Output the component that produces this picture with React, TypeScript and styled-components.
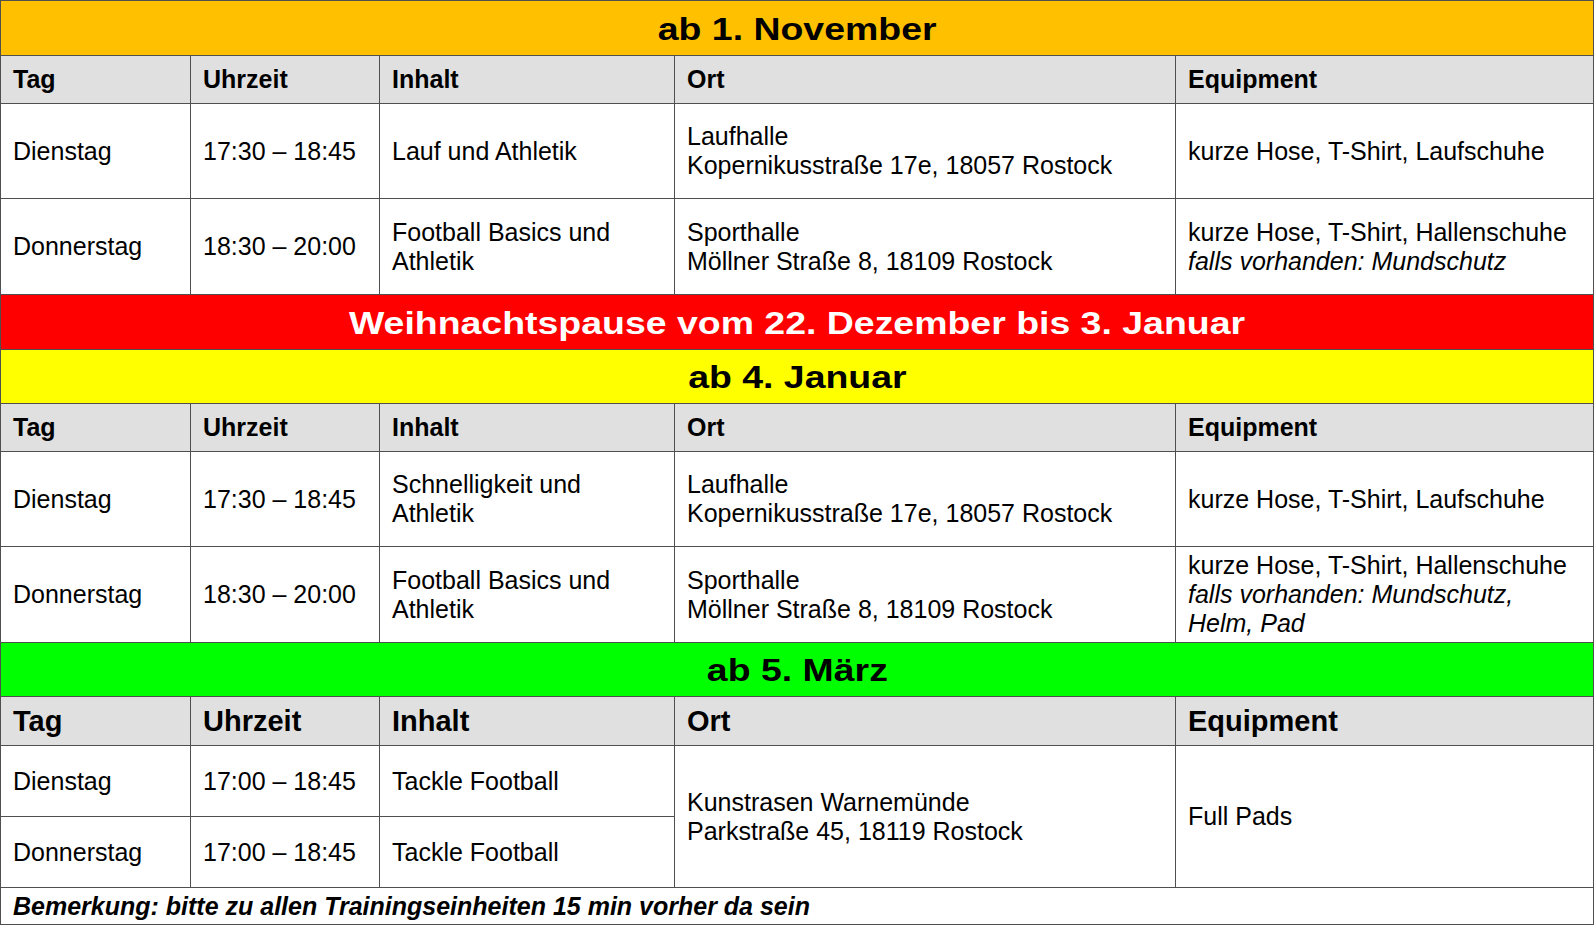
import React from "react";
import styled, { createGlobalStyle } from "styled-components";

const GlobalStyle = createGlobalStyle`
  html, body {
    margin: 0;
    padding: 0;
    background: #ffffff;
  }
  body {
    font-family: "Liberation Sans", Arial, Helvetica, sans-serif;
    color: #000;
  }
`;

type Row = {
  day: string;
  time: string;
  content: React.ReactNode;
  place?: React.ReactNode;
  gear?: React.ReactNode;
  height: number;
};

type Section = {
  title: string;
  bg: string;
  titleHeight: number;
  headHeight: number;
  headSize: number;
  rows: Row[];
};

const Note = styled.span`
  font-style: italic;
`;

const november: Section = {
  title: "ab 1. November",
  bg: "#ffc000",
  titleHeight: 55,
  headHeight: 48,
  headSize: 25,
  rows: [
    {
      day: "Dienstag",
      time: "17:30 – 18:45",
      content: "Lauf und Athletik",
      place: (
        <>
          Laufhalle
          <br />
          Kopernikusstraße 17e, 18057 Rostock
        </>
      ),
      gear: "kurze Hose, T-Shirt, Laufschuhe",
      height: 95,
    },
    {
      day: "Donnerstag",
      time: "18:30 – 20:00",
      content: (
        <>
          Football Basics und
          <br />
          Athletik
        </>
      ),
      place: (
        <>
          Sporthalle
          <br />
          Möllner Straße 8, 18109 Rostock
        </>
      ),
      gear: (
        <>
          kurze Hose, T-Shirt, Hallenschuhe
          <br />
          <Note>falls vorhanden: Mundschutz</Note>
        </>
      ),
      height: 96,
    },
  ],
};

const januar: Section = {
  title: "ab 4. Januar",
  bg: "#ffff00",
  titleHeight: 54,
  headHeight: 48,
  headSize: 25,
  rows: [
    {
      day: "Dienstag",
      time: "17:30 – 18:45",
      content: (
        <>
          Schnelligkeit und
          <br />
          Athletik
        </>
      ),
      place: (
        <>
          Laufhalle
          <br />
          Kopernikusstraße 17e, 18057 Rostock
        </>
      ),
      gear: "kurze Hose, T-Shirt, Laufschuhe",
      height: 95,
    },
    {
      day: "Donnerstag",
      time: "18:30 – 20:00",
      content: (
        <>
          Football Basics und
          <br />
          Athletik
        </>
      ),
      place: (
        <>
          Sporthalle
          <br />
          Möllner Straße 8, 18109 Rostock
        </>
      ),
      gear: (
        <>
          kurze Hose, T-Shirt, Hallenschuhe
          <br />
          <Note>
            falls vorhanden: Mundschutz,
            <br />
            Helm, Pad
          </Note>
        </>
      ),
      height: 96,
    },
  ],
};

const maerz: Section = {
  title: "ab 5. März",
  bg: "#00ff00",
  titleHeight: 54,
  headHeight: 49,
  headSize: 29,
  rows: [
    {
      day: "Dienstag",
      time: "17:00 – 18:45",
      content: "Tackle Football",
      place: (
        <>
          Kunstrasen Warnemünde
          <br />
          Parkstraße 45, 18119 Rostock
        </>
      ),
      gear: "Full Pads",
      height: 71,
    },
    {
      day: "Donnerstag",
      time: "17:00 – 18:45",
      content: "Tackle Football",
      height: 71,
    },
  ],
};

const columns = ["Tag", "Uhrzeit", "Inhalt", "Ort", "Equipment"];
const colWidths = [190, 189, 295, 501, 418];

const SectionHead = ({ section }: { section: Section }) => (
  <>
    <Banner $height={section.titleHeight}>
      <BannerCell colSpan={5} $bg={section.bg} $color="#000">
        <BannerText $stretch={1.17}>{section.title}</BannerText>
      </BannerCell>
    </Banner>
    <HeadRow $height={section.headHeight}>
      {columns.map((c) => (
        <HeadCell key={c} $size={section.headSize}>
          {c}
        </HeadCell>
      ))}
    </HeadRow>
  </>
);

const Body = ({ section, merged }: { section: Section; merged?: boolean }) => (
  <>
    {section.rows.map((r, i) => (
      <BodyRow key={i} $height={r.height}>
        <Cell>{r.day}</Cell>
        <Cell>{r.time}</Cell>
        <Cell>{r.content}</Cell>
        {(!merged || i === 0) && (
          <>
            <Cell rowSpan={merged ? section.rows.length : 1}>{r.place}</Cell>
            <Cell rowSpan={merged ? section.rows.length : 1}>{r.gear}</Cell>
          </>
        )}
      </BodyRow>
    ))}
  </>
);

export default function App() {
  return (
    <>
      <GlobalStyle />
      <Schedule>
        <colgroup>
          {colWidths.map((w, i) => (
            <col key={i} style={{ width: w }} />
          ))}
        </colgroup>
        <tbody>
          <SectionHead section={november} />
          <Body section={november} />
          <Banner $height={55}>
            <BannerCell colSpan={5} $bg="#ff0000" $color="#fff">
              <BannerText $stretch={1.17}>
                Weihnachtspause vom 22. Dezember bis 3. Januar
              </BannerText>
            </BannerCell>
          </Banner>
          <SectionHead section={januar} />
          <Body section={januar} />
          <SectionHead section={maerz} />
          <Body section={maerz} merged />
          <RemarkRow>
            <RemarkCell colSpan={5}>
              Bemerkung: bitte zu allen Trainingseinheiten 15 min vorher da
              sein
            </RemarkCell>
          </RemarkRow>
        </tbody>
      </Schedule>
    </>
  );
}

const Schedule = styled.table`
  width: 1594px;
  table-layout: fixed;
  border-collapse: collapse;
  font-size: 25px;
  line-height: 29px;
  td {
    border: 1px solid #4f4f4f;
    padding: 0 12px;
    vertical-align: middle;
    text-align: left;
  }
`;

const Banner = styled.tr<{ $height: number }>`
  height: ${(p) => p.$height}px;
`;

const BannerCell = styled.td<{ $bg: string; $color: string }>`
  && {
    background: ${(p) => p.$bg};
    color: ${(p) => p.$color};
    text-align: center;
    padding: 1px 0 0;
  }
  font-weight: bold;
  font-size: 32px;
  line-height: 36px;
  white-space: nowrap;
`;

const BannerText = styled.span<{ $stretch: number }>`
  display: inline-block;
  transform: scaleX(${(p) => p.$stretch});
`;

const HeadRow = styled.tr<{ $height: number }>`
  height: ${(p) => p.$height}px;
  background: #e0e0e0;
`;

const HeadCell = styled.td<{ $size: number }>`
  font-weight: bold;
  font-size: ${(p) => p.$size}px;
`;

const BodyRow = styled.tr<{ $height: number }>`
  height: ${(p) => p.$height}px;
  background: #ffffff;
`;

const Cell = styled.td`
  white-space: nowrap;
`;

const RemarkRow = styled.tr`
  height: 37px;
`;

const RemarkCell = styled.td`
  font-weight: bold;
  font-style: italic;
  font-size: 25px;
`;
